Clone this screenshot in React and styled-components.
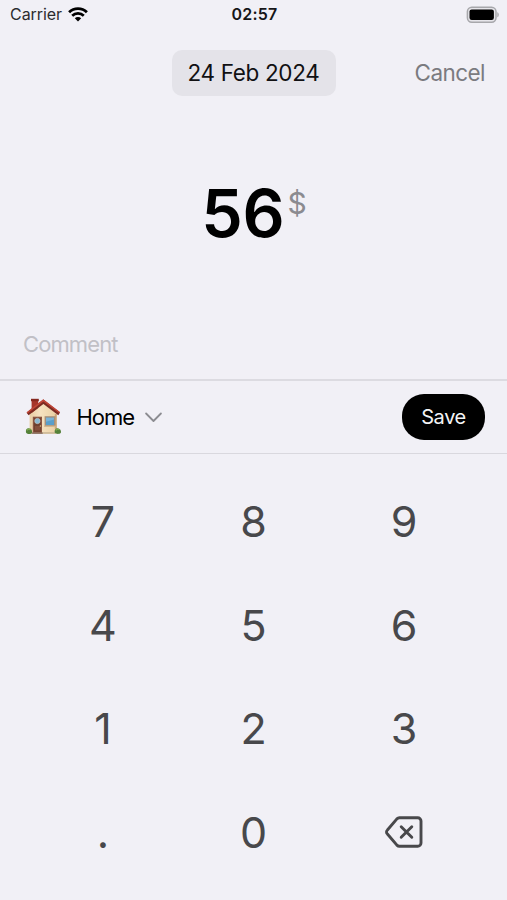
import React from 'react';
import styled, { createGlobalStyle } from 'styled-components';

const GlobalStyle = createGlobalStyle`
  * {
    box-sizing: border-box;
  }

  body {
    margin: 0;
    background: #f1f0f6;
  }

  button {
    padding: 0;
    border: 0;
    background: none;
    font: inherit;
    color: inherit;
  }
`;

const Screen = styled.main`
  display: flex;
  flex-direction: column;
  width: 507px;
  height: 900px;
  overflow: hidden;
  background: #f1f0f6;
  color: #000;
  font-family: Inter, 'Liberation Sans', sans-serif;
  white-space: nowrap;
`;

const StatusBar = styled.div`
  display: grid;
  grid-template-columns: 1fr auto 1fr;
  align-items: center;
  height: 28px;
  padding: 0 8px 0 10px;
  font-size: 16px;
  line-height: 28px;
`;

const Carrier = styled.div`
  display: flex;
  align-items: center;
  gap: 6px;
  color: #2c2c2f;
  letter-spacing: -0.05px;
`;

const Time = styled.div`
  font-weight: 600;
  letter-spacing: 0.25px;
  color: #161618;
`;

const Battery = styled.svg`
  justify-self: end;
`;

const Header = styled.header`
  display: grid;
  grid-template-columns: 1fr 164px 1fr;
  align-items: center;
  height: 46px;
  margin-top: 22px;
  padding: 0 22px;
  font-size: 22.5px;
`;

const DateButton = styled.button`
  grid-column: 2;
  height: 46px;
  padding-bottom: 1px;
  border-radius: 10px;
  background: #e4e3e9;
  color: #111113;
  letter-spacing: -0.35px;
`;

const CancelButton = styled.button`
  justify-self: end;
  padding-bottom: 1px;
  color: #7b7b80;
  letter-spacing: -0.55px;
`;

const Amount = styled.div`
  display: flex;
  justify-content: center;
  align-items: flex-start;
  gap: 3px;
  height: 214px;
  padding-top: 77px;
`;

const Value = styled.span`
  font-size: 66px;
  font-weight: 600;
  line-height: 80px;
  letter-spacing: -0.3px;
`;

const Currency = styled.span`
  margin-top: 11px;
  font-size: 30px;
  line-height: 38px;
  letter-spacing: -1px;
  color: #8b8b90;
`;

const Comment = styled.div`
  flex: none;
  height: 69px;
  padding: 0 23px;
  font-size: 22px;
  line-height: 68px;
  letter-spacing: -0.9px;
  color: #c1c0c6;
`;

const CategoryBar = styled.section`
  display: flex;
  align-items: center;
  justify-content: space-between;
  flex: none;
  height: 75px;
  padding: 0 22px 0 25px;
  border-top: 2px solid #dcdbe1;
  border-bottom: 1px solid #d9d8de;
`;

const Category = styled.button`
  display: flex;
  align-items: center;
  font-size: 22px;
`;

const CategoryName = styled.span`
  margin: 0 11px 0 13.5px;
  letter-spacing: -1px;
`;

const SaveButton = styled.button`
  width: 83px;
  height: 46px;
  border-radius: 22px;
  background: #000;
  color: #f4f4f6;
  font-size: 20px;
  letter-spacing: -0.4px;
`;

const Keypad = styled.div`
  display: grid;
  grid-template-columns: repeat(3, 150.5px);
  grid-auto-rows: 103.5px;
  justify-content: center;
  margin-top: 15.5px;
`;

const Key = styled.button`
  display: flex;
  align-items: center;
  justify-content: center;
  font-size: 43px;
  line-height: 52px;
  color: #48484b;
`;

const WifiIcon = () => (
  <svg width="20" height="15" viewBox="0 0 20 15">
    <path d="M10 14.6 6.8 11.3a4.6 4.6 0 0 1 6.4 0z" fill="#000" />
    <path d="M4.2 8.8a8.3 8.3 0 0 1 11.6 0" fill="none" stroke="#000" strokeWidth="2.7" />
    <path d="M1.1 5.2a12.7 12.7 0 0 1 17.8 0" fill="none" stroke="#000" strokeWidth="2.8" />
  </svg>
);

const BatteryIcon = () => (
  <Battery width="33" height="17" viewBox="0 0 33 17">
    <rect x="1.4" y="1.2" width="28.6" height="15" rx="4.4" fill="#e6e5ea" stroke="#a7a7ab" strokeWidth="1.5" />
    <rect x="3.5" y="3.4" width="24.4" height="10.6" rx="2.2" fill="#000" />
    <path d="M31.3 6.2c2 .6 2 4.4 0 5z" fill="#a7a7ab" />
  </Battery>
);

const HouseIcon = () => (
  <svg width="38" height="38" viewBox="0 0 38 38">
    <defs>
      <linearGradient id="wall" x1="0" y1="0" x2="1" y2="0">
        <stop offset="0" stopColor="#e8cda3" />
        <stop offset="0.4" stopColor="#f6e2c0" />
        <stop offset="1" stopColor="#ead0a4" />
      </linearGradient>
    </defs>
    <path d="M4.6 15 18.5 5l12.9 11v19.5H4.6z" fill="url(#wall)" />
    <path d="M29.8 16h2v15h-2z" fill="#cda878" />
    <path d="M5.2 34h26.2v1.9H5.2z" fill="#d1bd9b" />
    <path d="M6.6 2h6.6v8l-6.6 5z" fill="#a5352b" />
    <path d="M6 .8h7.8v2.4H6z" fill="#862820" />
    <path d="M1.6 14.7 18.3 1.6 35 14.4l-1.7 2.8L18.4 6 3.6 17.2z" fill="#7d2b22" />
    <path d="M1.6 14.3 18.3 1.2 35 14l-1 1.1L18.4 3.5 2.8 15.2z" fill="#c04537" />
    <path d="M7.8 18.7h9.2v16.7H7.8z" fill="#8b5540" />
    <path d="M9 20h6.8v13.8H9z" fill="#70402f" />
    <circle cx="12.4" cy="23" r="2.7" fill="#8ab8d2" stroke="#c5c5bd" strokeWidth="0.6" />
    <path d="M9.9 28H15v4.5H9.9z" fill="#854f3b" />
    <circle cx="15.4" cy="28" r="0.7" fill="#e5c581" />
    <path d="M7.1 34.4h10.6V36H7.1z" fill="#93796a" />
    <path d="M19.6 18.2h10.8v10.4H19.6z" fill="#a58f7a" />
    <path d="M21 19.7h8v7.3h-8z" fill="#5a9fca" />
    <path d="M21 19.7h8v1.8l-8 2.2z" fill="#79b2d6" />
    <path d="M19.3 27.6h11.4v1.4H19.3z" fill="#d3b78e" />
    <path d="M1 34.5c-.6-2.8 1-4.4 3-4.1 2.3-.1 3.5 1.8 3 4.6-1.1 1.4-4.8 1.4-6-.5z" fill="#55813a" />
    <path d="M29.7 34.6c-.5-2.7 1.2-4.5 3.2-4.2 2.2.1 3.6 1.9 3 4.4-1.1 1.6-5 1.6-6.2-.2z" fill="#55813a" />
    <path d="M2 32.5c.8-1.8 2.8-1.9 3.5-.4M31 32.5c.8-1.8 2.8-1.9 3.5-.4" fill="none" stroke="#82aa4f" strokeWidth="1.2" />
  </svg>
);

const ChevronIcon = () => (
  <svg width="17" height="11" viewBox="0 0 17 11">
    <path d="m1.1 1.5 7.4 7.5 7.4-7.5" fill="none" stroke="#8c8c91" strokeWidth="1.8" strokeLinecap="round" strokeLinejoin="round" />
  </svg>
);

const BackspaceIcon = () => (
  <svg width="38" height="32" viewBox="0 0 38 32" fill="none" stroke="#48484b" strokeWidth="2.9" strokeLinecap="round" strokeLinejoin="round">
    <path d="M14.4 1.8h18.3a3.3 3.3 0 0 1 3.3 3.3v21.8a3.3 3.3 0 0 1-3.3 3.3H14.4c-1 0-1.8-.4-2.5-1.1L2.4 18a2.7 2.7 0 0 1 0-4l9.5-11.1c.7-.7 1.5-1.1 2.5-1.1z" />
    <path d="m16.2 10.7 10.6 10.6M26.8 10.7 16.2 21.3" />
  </svg>
);

const keys = ['7', '8', '9', '4', '5', '6', '1', '2', '3', '.', '0'];

const App = () => {
  return (
    <>
      <GlobalStyle />
      <Screen>
        <StatusBar>
          <Carrier>
            Carrier
            <WifiIcon />
          </Carrier>
          <Time>02:57</Time>
          <BatteryIcon />
        </StatusBar>
        <Header>
          <DateButton>24 Feb 2024</DateButton>
          <CancelButton>Cancel</CancelButton>
        </Header>
        <Amount>
          <Value>56</Value>
          <Currency>$</Currency>
        </Amount>
        <Comment>Comment</Comment>
        <CategoryBar>
          <Category>
            <HouseIcon />
            <CategoryName>Home</CategoryName>
            <ChevronIcon />
          </Category>
          <SaveButton>Save</SaveButton>
        </CategoryBar>
        <Keypad>
          {keys.map((key) => (
            <Key key={key}>{key}</Key>
          ))}
          <Key aria-label="Delete">
            <BackspaceIcon />
          </Key>
        </Keypad>
      </Screen>
    </>
  );
};

export default App;
